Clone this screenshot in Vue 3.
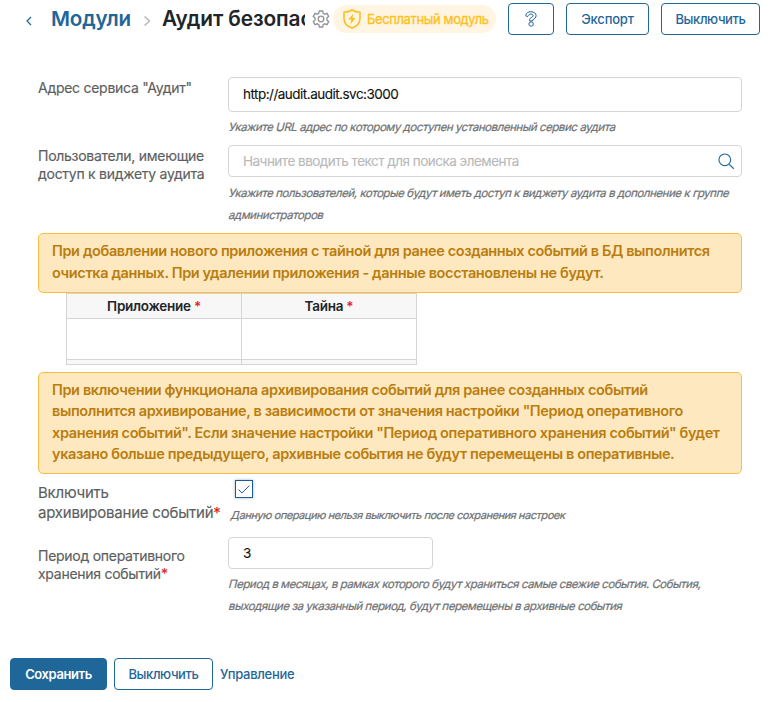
<script setup>
import { ref } from 'vue'

const address = ref('http://audit.audit.svc:3000')
const users = ref('')
const period = ref('3')
const archive = ref(true)
</script>

<template>
  <div class="page">
    <header class="header">
      <svg class="back" viewBox="0 0 8 10"><path d="M6 1 2 5l4 4" /></svg>
      <a class="crumb">Модули</a>
      <svg class="sep" viewBox="0 0 8 12"><path d="m1.5 1.500 5 4.500-5 4.500" /></svg>
      <h1 class="title">Аудит безопасности</h1>
      <svg class="gear" viewBox="0 0 18 18">
        <path d="M7.300 1h3.400l.5 2.300 1.500.9 2.300-.8 1.700 2.900-1.800 1.700v2l1.800 1.700-1.700 2.900-2.300-.8-1.500.9-.5 2.300H7.300l-.5-2.300-1.500-.9-2.300.8-1.700-2.900L3.100 10V8L1.300 6.300 3 3.400l2.300.8 1.500-.9z" />
        <circle cx="9" cy="9" r="2.800" />
      </svg>
      <span class="badge">
        <svg class="shield" viewBox="0 0 18 20">
          <path class="outline" d="M9 1c2.200 1.500 4.700 2.200 8 2.300v6.200c0 4.500-3 7.700-8 9.500-5-1.800-8-5-8-9.500V3.300C4.300 3.200 6.800 2.500 9 1z" />
          <path class="bolt" d="M10.300 4.800 5.300 10.600h3l-.9 4.600 5.200-6.300H9.500z" />
        </svg>
        <span>Бесплатный модуль</span>
      </span>
      <button class="btn help" aria-label="Справка">
        <svg viewBox="0 0 12 16">
          <path d="M.8 4.300C1 2 3 .7 5.900.7c3 0 5.200 1.500 5.200 3.900 0 2.100-1.500 3.200-3.400 4.300v1H4.600V8.300c0-1.400 3.500-1.800 3.500-3.700 0-1-.8-1.600-2.200-1.600-1.300 0-2 .6-2.300 1.600C3.200 5.700.7 5.800.8 4.300z" />
          <circle cx="6.100" cy="13" r="2.200" />
        </svg>
      </button>
      <button class="btn export">Экспорт</button>
      <button class="btn off">Выключить</button>
    </header>

    <main class="form">
      <section class="row first">
        <label class="label">Адрес сервиса "Аудит"</label>
        <div class="field">
          <input v-model="address" class="input tall" />
          <p class="hint"><span>Укажите URL адрес по которому доступен установленный сервис аудита</span></p>
        </div>
      </section>

      <section class="row second">
        <label class="label">Пользователи, имеющие<br />доступ к виджету аудита</label>
        <div class="field">
          <div class="input search">
            <input v-model="users" placeholder="Начните вводить текст для поиска элемента" />
            <svg viewBox="0 0 18 18"><circle cx="7.200" cy="7.200" r="6.200" /><path d="m11.700 11.700 5 5" /></svg>
          </div>
          <p class="hint h-users"><span>Укажите пользователей, которые будут иметь доступ к виджету аудита в дополнение к группе</span><span>администраторов</span></p>
        </div>
      </section>

      <div class="alert">
        При добавлении нового приложения с тайной для ранее созданных событий в БД выполнится<br />
        очистка данных. При удалении приложения - данные восстановлены не будут.
      </div>

      <table class="grid">
        <thead><tr><th>Приложение <i>*</i></th><th>Тайна <i>*</i></th></tr></thead>
        <tbody><tr><td></td><td></td></tr></tbody>
        <tfoot><tr><td></td><td></td></tr></tfoot>
      </table>

      <div class="alert long">
        При включении функционала архивирования событий для ранее созданных событий<br />
        выполнится архивирование, в зависимости от значения настройки "Период оперативного<br />
        хранения событий". Если значение настройки "Период оперативного хранения событий" будет<br />
        указано больше предыдущего, архивные события не будут перемещены в оперативные.
      </div>

      <section class="row third">
        <label class="label large">Включить<br />архивирование событий<i>*</i></label>
        <div class="field">
          <button class="check" role="checkbox" :aria-checked="archive" @click="archive = !archive">
            <svg v-if="archive" viewBox="0 0 12 9"><path d="m.6 4.600 3.300 3.400L11.400.7" /></svg>
          </button>
          <p class="hint h-check"><span>Данную операцию нельзя выключить после сохранения настроек</span></p>
        </div>
      </section>

      <section class="row fourth">
        <label class="label">Период оперативного<br />хранения событий<i>*</i></label>
        <div class="field">
          <input v-model="period" class="input short" />
          <p class="hint"><span>Период в месяцах, в рамках которого будут храниться самые свежие события. События,</span><span>выходящие за указанный период, будут перемещены в архивные события</span></p>
        </div>
      </section>
    </main>

    <footer class="footer">
      <button class="btn primary">Сохранить</button>
      <button class="btn off">Выключить</button>
      <a class="link">Управление</a>
    </footer>
  </div>
</template>

<style>
body { margin: 0; background: #fff; }
</style>

<style scoped>
* { box-sizing: border-box; }
.page {
  width: 772px;
  height: 702px;
  overflow: hidden;
  display: flex;
  flex-direction: column;
  background: #fff;
  color: #212529;
  font: 14px/18px Inter, "Liberation Sans", sans-serif;
  letter-spacing: -0.27px;
}
svg { display: block; flex: none; fill: none; stroke: currentColor; }
.header { display: flex; align-items: center; height: 38px; padding: 0 12px 0 25px; flex: none; }
.back { width: 8px; height: 10px; color: #1f6699; margin-top: 3px; stroke-width: 1.2; }
.crumb { width: 92px; margin-left: 18px; color: #1f6699; font-size: 20.6px; font-weight: 600; letter-spacing: -0.2px; }
.sep { width: 8px; height: 12px; margin: 3px 0 0; color: #b5b5b5; stroke-width: 1.4; }
.title { width: 143px; margin: 0 0 0 11px; overflow: hidden; white-space: nowrap; font-size: 20.8px; line-height: 26px; font-weight: 600; letter-spacing: -0.1px; }
.gear { width: 18px; height: 18px; margin-left: 7px; color: #909294; stroke-width: 1.3; }
.badge { display: flex; align-items: center; width: 163px; height: 28px; margin-left: 3px; padding-left: 10px; gap: 6px; border-radius: 14px; background: #fff5e2; color: #fdc01b; font-size: 13px; white-space: nowrap; -webkit-text-stroke: 0.3px; letter-spacing: -0.38px; }
.shield { width: 18px; height: 20px; stroke-width: 1.6; }
.bolt { fill: currentColor; stroke: none; }
.btn { height: 32px; padding: 0; border: 1px solid #1f6699; border-radius: 4px; background: #fff; color: #1f6699; font: 500 13px/18px Inter, sans-serif; letter-spacing: -0.2px; flex: none; }
.help { display: flex; align-items: center; justify-content: center; width: 46px; margin-left: 12px; }
.help svg { width: 12px; height: 16px; stroke-width: 1; }
.export { width: 83px; margin-left: 12px; }
.off { width: 99px; letter-spacing: -0.4px; }
.header .off { margin-left: 12px; }

.form { padding: 39px 30px 0 38px; height: 620px; flex: none; }
.row { display: grid; grid-template-columns: 190px 514px; align-items: start; }
.first { height: 68px; }
.second { height: 88px; }
.third { height: 63px; }
.fourth { height: 90px; }
.label { padding-top: 2px; color: #5c5e60; white-space: nowrap; -webkit-text-stroke: 0.15px; }
.third .label { padding-top: 9px; }
.fourth .label { padding-top: 10px; }
.large { font-size: 15px; line-height: 20px; letter-spacing: -0.22px; }
i { color: #e02424; font-style: normal; }
.input { display: block; width: 514px; height: 32px; padding: 0 14px; border: 1px solid #d5d5d5; border-radius: 4px; background: #fff; color: #111; font: 13.5px/18px Inter, sans-serif; letter-spacing: -0.51px; outline: 0; -webkit-text-stroke: 0.12px; }
.tall { height: 35px; padding-bottom: 1px; }
.short { width: 205px; }
.search { display: flex; align-items: center; padding-right: 6px; }
.search input { flex: 1; min-width: 0; padding: 0; border: 0; outline: 0; font: inherit; letter-spacing: inherit; }
.search input::placeholder { color: #b9b9b9; opacity: 1; }
.search svg { width: 17px; height: 17px; color: #1f6699; stroke-width: 1.2; }
.hint { margin: 4px 0 0; color: #6f7173; font-size: 11.500px; line-height: 22px; letter-spacing: -0.44px; white-space: nowrap; -webkit-text-stroke: 0.2px; }
.hint span { display: block; width: max-content; transform: skewX(-14deg); transform-origin: 0 70%; }
.h-users { margin-top: 5px; }

.alert { width: 704px; height: 60px; padding: 6px 12px 6px 13px; border: 1px solid #fbbd45; border-radius: 5px; background: #fee8bf; color: #b97d10; font-size: 14.500px; line-height: 22px; font-weight: 600; letter-spacing: -0.37px; white-space: nowrap; }
.long { height: 102px; line-height: 21.3px; }
.grid { width: 351px; margin: 0 0 7px 28px; table-layout: fixed; border-collapse: collapse; }
.grid th, .grid td { padding: 0; border: 1px solid #d5d5d5; }
.grid th { height: 25px; background: #f7f7f7; font-size: 13.500px; line-height: 18px; font-weight: 600; letter-spacing: -0.27px; }
.grid td { height: 41px; }
.grid tfoot td { height: 5px; background: #f7f7f7; }
.check { display: flex; align-items: center; justify-content: center; width: 18px; height: 18px; margin: 6px 0 0 7px; padding: 0; border: 1px solid #1f5a96; background: #fff; color: #1f5a96; box-shadow: 0 0 3px #9db8d6; }
.check svg { width: 12px; height: 9px; stroke-width: 1; }
.h-check { margin: 6px 0 0 2px; font-size: 11px; letter-spacing: -0.44px; }

.footer { display: flex; align-items: center; height: 32px; padding-left: 10px; flex: none; }
.primary { width: 97px; margin-right: 7px; background: #1f6699; color: #fff; font-weight: 600; letter-spacing: -0.4px; }
.link { margin-left: 7px; color: #1f6699; font-size: 13px; font-weight: 500; letter-spacing: -0.27px; }
</style>
